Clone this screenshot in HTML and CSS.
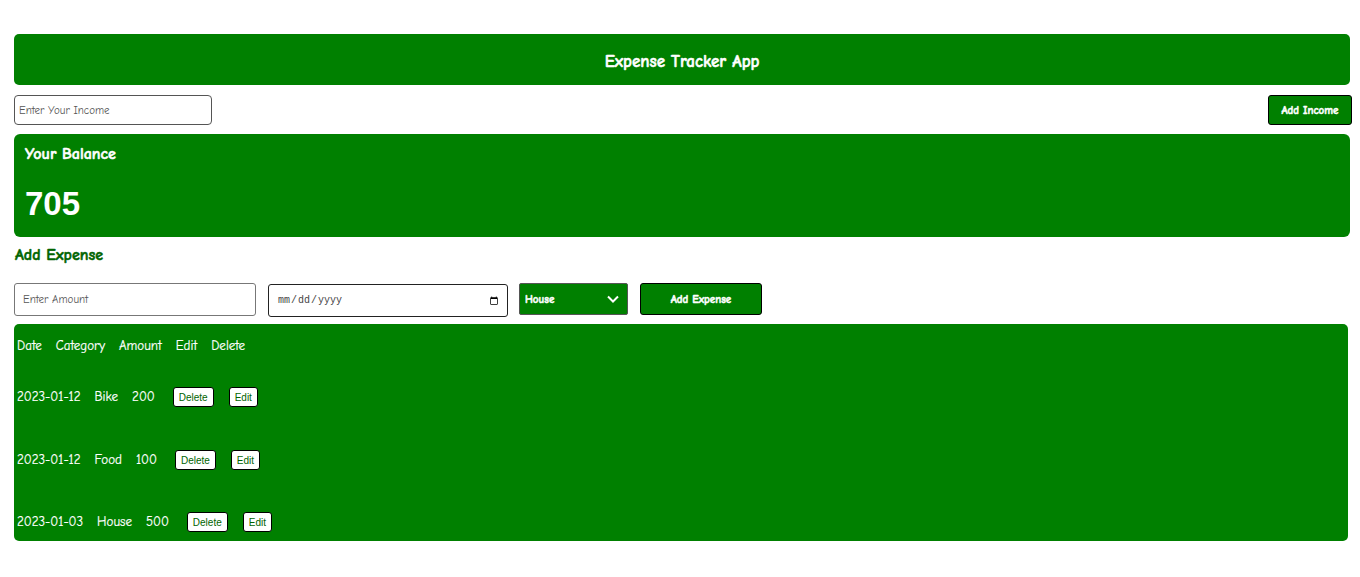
FILE: index.html
```html
<!DOCTYPE html>
<html lang="en">
<head>
<meta charset="utf-8">
<title>Expense Tracker App</title>
<link rel="stylesheet" href="styles.css">
</head>
<body>
<div class="app">
  <header class="header">Expense Tracker App</header>

  <div class="income-row">
    <input class="income-input" type="text" placeholder="Enter Your Income">
    <button class="btn-green add-income">Add Income</button>
  </div>

  <section class="balance">
    <div class="balance-title">Your Balance</div>
    <div class="balance-value">705</div>
  </section>

  <h3 class="section-title">Add Expense</h3>

  <div class="expense-form">
    <input class="amount-input" type="text" placeholder="Enter Amount">
    <input class="date-input" type="date">
    <div class="select-wrap">
      <select class="category-select">
        <option>House</option>
        <option>Food</option>
        <option>Bike</option>
      </select>
      <svg class="chevron" width="14" height="10" viewBox="0 0 14 10"><path d="M2 2.5 L7 7.5 L12 2.5" fill="none" stroke="#fff" stroke-width="2"/></svg>
    </div>
    <button class="btn-green add-expense">Add Expense</button>
  </div>

  <section class="list">
    <div class="list-head">
      <span>Date</span><span>Category</span><span>Amount</span><span>Edit</span><span>Delete</span>
    </div>
    <div class="list-row">
      <span>2023-01-12</span><span>Bike</span><span>200</span>
      <button class="btn-small">Delete</button><button class="btn-small">Edit</button>
    </div>
    <div class="list-row">
      <span>2023-01-12</span><span>Food</span><span>100</span>
      <button class="btn-small">Delete</button><button class="btn-small">Edit</button>
    </div>
    <div class="list-row last">
      <span>2023-01-03</span><span>House</span><span>500</span>
      <button class="btn-small">Delete</button><button class="btn-small">Edit</button>
    </div>
  </section>
</div>
</body>
</html>
```
FILE: styles.css
```css
* { box-sizing: border-box; }

body {
  margin: 0;
  background: #fff;
  font-family: "Comic Sans MS", "Comic Neue", "DejaVu Sans", sans-serif;
}

.header, .btn-green, .balance-title, .section-title, .category-select {
  -webkit-text-stroke: 0.5px currentColor;
}

.list {
  -webkit-text-stroke: 0.2px currentColor;
}

.app {
  padding: 34px 10px 0 14px;
  display: flex;
  flex-direction: column;
}

.header {
  height: 51px;
  background: #008000;
  color: #fff;
  border-radius: 5px;
  display: flex;
  align-items: center;
  justify-content: center;
  font-weight: bold;
  font-size: 17px;
  padding-top: 3px;
}

.income-row {
  display: flex;
  justify-content: space-between;
  margin-top: 10px;
}

.income-input {
  width: 198px;
  height: 30px;
  border: 1px solid #555;
  border-radius: 4px;
  padding: 0 4px;
  font-family: inherit;
  font-size: 11px;
}
.income-input::placeholder, .amount-input::placeholder { color: #555; }

.btn-green {
  background: #008000;
  color: #fff;
  border: 1px solid #000;
  border-radius: 3px;
  font-family: inherit;
  font-weight: bold;
  font-size: 11px;
  cursor: pointer;
}

.add-income {
  width: 84px;
  height: 30px;
  margin-left: auto;
  margin-right: -1px;
  transform: translateX(1px);
}

.balance {
  margin-top: 9px;
  height: 103px;
  background: #008000;
  color: #fff;
  border-radius: 6px;
  padding: 10px 11px;
}

.balance-title {
  font-weight: bold;
  font-size: 16px;
  line-height: 20px;
}

.balance-value {
  margin-top: 20px;
  font-family: "Liberation Sans", Arial, sans-serif;
  font-weight: bold;
  font-size: 33px;
  line-height: 40px;
}

.section-title {
  margin: 8px 0 0 1px;
  font-size: 16px;
  line-height: 20px;
  color: #006400;
}

.expense-form {
  display: flex;
  align-items: flex-start;
  margin-top: 18px;
}

.amount-input {
  width: 242px;
  height: 33px;
  border: 1px solid #777;
  border-radius: 3px;
  padding: 0 8px;
  font-family: inherit;
  font-size: 11px;
}

.date-input {
  margin-left: 12px;
  margin-top: 1px;
  width: 240px;
  height: 33px;
  border: 1px solid #222;
  border-radius: 3px;
  padding: 0 6px 0 8px;
  font-family: "Liberation Mono", monospace;
  font-size: 10px;
  color: #444;
}

.select-wrap {
  position: relative;
  margin-left: 11px;
}

.category-select {
  appearance: none;
  -webkit-appearance: none;
  width: 109px;
  height: 32px;
  background: #008000;
  color: #fff;
  border: 1px solid #555;
  border-radius: 2px;
  padding: 0 5px;
  font-family: inherit;
  font-weight: bold;
  font-size: 11px;
}

.chevron {
  position: absolute;
  right: 8px;
  top: 11px;
  pointer-events: none;
}

.add-expense {
  margin-left: 12px;
  width: 122px;
  height: 32px;
}

.list {
  margin-top: 7px;
  margin-right: 2px;
  height: 217px;
  background: #008000;
  color: #fff;
  border-radius: 5px;
  padding: 13px 3px 0 3px;
  font-size: 13px;
}

.list-head {
  display: flex;
  gap: 14px;
  line-height: 18px;
}

.list-row {
  display: flex;
  align-items: center;
  gap: 14px;
  height: 22px;
  margin-top: 31px;
}
.list-row + .list-row { margin-top: 41px; }
.list-row.last { margin-top: 40px; }

.list-row span { line-height: 18px; }

.btn-small {
  background: #fff;
  color: #006400;
  border: 1px solid #000;
  border-radius: 3px;
  font-family: "Liberation Sans", Arial, sans-serif;
  font-size: 10px;
  -webkit-text-stroke: 0;
  height: 20px;
  padding: 0 5px;
  margin-left: 4px;
  cursor: pointer;
}
.btn-small + .btn-small { margin-left: 1px; }
```
